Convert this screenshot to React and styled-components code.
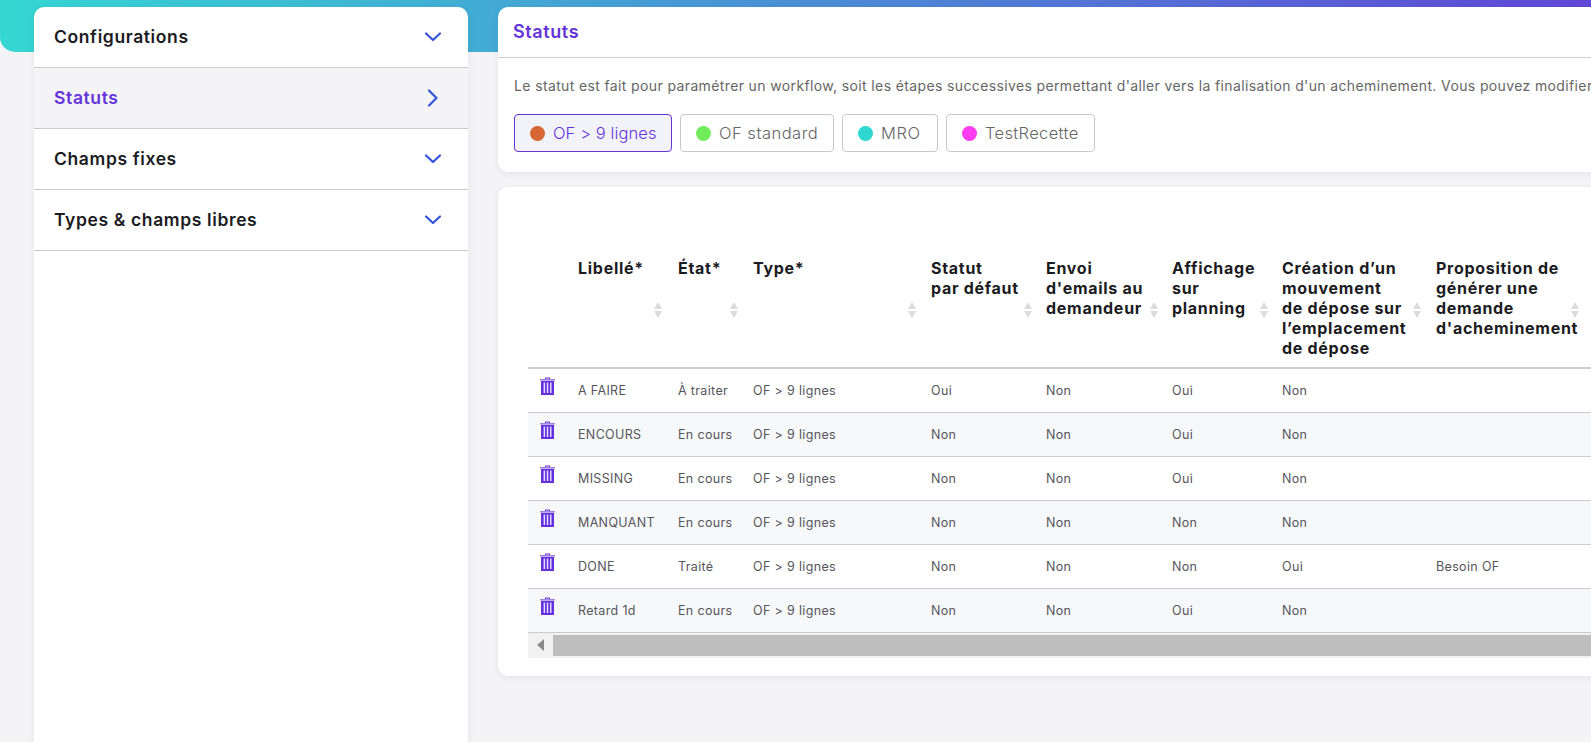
import React from 'react';
import styled, { createGlobalStyle } from 'styled-components';

const Global = createGlobalStyle`
  html, body { margin: 0; height: 100%; overflow: hidden; background: #f4f4f6; }
  body { font-family: Inter, "Liberation Sans", sans-serif; color: #1b1b22; }
  * { box-sizing: border-box; }
`;

const Banner = styled.div`
  position: absolute; left: 0; top: 0; width: 100%; height: 52px;
  background: linear-gradient(90deg, #35d7d3 0%, #6147d7 100%);
  border-bottom-left-radius: 15px;
`;
const Page = styled.div`
  position: relative; width: 1591px; height: 742px; overflow: hidden;
  display: grid; grid-template-columns: 434px 1300px; column-gap: 30px;
  padding: 7px 0 0 34px;
`;
const Sidebar = styled.nav`
  position: relative; background: #fff; border-radius: 10px 10px 0 0;
  box-shadow: 0 2px 10px rgba(0,0,0,.06); height: 760px;
`;
const NavRow = styled.div`
  height: 61px; display: flex; align-items: center; justify-content: space-between;
  padding: 0 26px 0 20px; border-bottom: 1px solid #cbcbcf;
  background: ${p => (p.$active ? '#f4f4f6' : 'transparent')};
  color: ${p => (p.$active ? '#6433d9' : '#1b1b22')};
  font-size: 17.5px; font-weight: 600; letter-spacing: .62px; line-height: 20px;
  border-radius: ${p => (p.$first ? '10px 10px 0 0' : '0')};
`;
const NavLabel = styled.span`
  margin-top: -1px;
`;
const Main = styled.main`
  position: relative; display: flex; flex-direction: column; gap: 15px; width: 1300px;
`;
const Card = styled.section`
  background: #fff; border-radius: 10px; box-shadow: 0 2px 10px rgba(0,0,0,.06);
  overflow: hidden;
`;
const CardTitle = styled.h1`
  margin: 0; height: 51px; padding: 0 15px 2px; display: flex; align-items: center;
  font-size: 18px; font-weight: 600; letter-spacing: .6px; color: #6433d9; border-bottom: 1px solid #cbcbcf;
`;
const Description = styled.p`
  margin: 0; padding: 19px 16px 0; font-size: 14px; line-height: 17px; color: #666;
  white-space: nowrap; font-weight: 400; letter-spacing: .37px;
`;
const Pills = styled.div`
  display: flex; gap: 8px; padding: 20px 16px 20px;
`;
const Pill = styled.div`
  height: 38px; width: ${p => p.$w}px; display: flex; align-items: center; gap: 8px; padding-left: 15px;
  border: 1px solid ${p => (p.$active ? '#6433d9' : '#c8c8cc')}; border-radius: 4px;
  background: ${p => (p.$active ? '#f2f3f8' : '#fff')};
  color: ${p => (p.$active ? '#6433d9' : '#666')};
  font-size: 16.5px; font-weight: 300; letter-spacing: ${p => p.$ls}px; white-space: nowrap;
`;
const Dot = styled.span`
  width: 15px; height: 15px; border-radius: 50%; flex: none; background: ${p => p.$color};
`;
const TableCard = styled(Card)`
  height: 489px; padding: 62px 0 0 30px;
`;
const Table = styled.table`
  border-collapse: collapse; table-layout: fixed; width: 1270px;
`;
const HeadCell = styled.th`
  position: relative; height: 117px; padding: 9px 0 9px 0; text-align: left; vertical-align: top;
  font-size: 16px; line-height: 20px; font-weight: 700; letter-spacing: .72px; color: #1b1b22;
  border-bottom: 2px solid #cbcbcf; white-space: nowrap;
`;
const SortIcon = styled.svg`
  position: absolute; top: 53px; right: ${p => p.$r}px; width: 8px; height: 16px;
`;
const Row = styled.tr`
  background: ${p => (p.$even ? '#f7f8fa' : '#fff')};
`;
const Cell = styled.td`
  height: 44px; padding: 0; font-size: 12.5px; font-weight: 400; color: #55555b;
  border-bottom: 1px solid #cbcbcf; white-space: nowrap; letter-spacing: .35px;
`;
const TrashCell = styled(Cell)`
  padding: 0 0 8px 12px;
`;
const Scrollbar = styled.div`
  display: flex; align-items: center; height: 25px; width: 1270px; background: #f1f1f1;
`;
const ScrollArrow = styled.div`
  width: 25px; display: flex; justify-content: center;
`;
const ScrollThumb = styled.div`
  flex: 1; height: 21px; background: #bebebe;
`;

const Chevron = ({ right }) => (
  <svg width="18" height="18" viewBox="0 0 18 18" fill="none" stroke="#3353d8" strokeWidth="2.2" strokeLinecap="round" strokeLinejoin="round">
    {right ? <path d="M5 1.5 12.5 9 5 16.5" /> : <path d="M2 5.5 9 12 16 5.5" />}
  </svg>
);

const Trash = () => (
  <svg width="15" height="18" viewBox="0 0 15 18" style={{ display: 'block' }}>
    <path d="M5 0.5h5v1.6h-1v-.6h-3v.6h-1z" fill="#6530e0" />
    <rect x="0" y="2" width="15" height="1.6" fill="#9d7fe8" />
    <path d="M1 4h13v14H1z" fill="#6530e0" />
    <rect x="3.6" y="5.5" width="1.5" height="10.5" fill="#e3daf9" />
    <rect x="6.8" y="5.5" width="1.5" height="10.5" fill="#e3daf9" />
    <rect x="10" y="5.5" width="1.5" height="10.5" fill="#e3daf9" />
  </svg>
);

const Sort = ({ r }) => (
  <SortIcon $r={r} viewBox="0 0 8 16">
    <path d="M4 0 8 7H0z M0 9h8L4 16z" fill="#dcdcdc" />
  </SortIcon>
);

const columns = [
  { w: 50, label: '' },
  { w: 100, label: 'Libellé*', r: 16 },
  { w: 75, label: 'État*', r: 15 },
  { w: 178, label: 'Type*', r: 15 },
  { w: 115, label: <>Statut<br />par défaut</>, r: 14 },
  { w: 126, label: <>Envoi<br />d'emails au<br />demandeur</>, r: 14 },
  { w: 110, label: <>Affichage<br />sur<br />planning</>, r: 14 },
  { w: 154, label: <>Création d’un<br />mouvement<br />de dépose sur<br />l’emplacement<br />de dépose</>, r: 15 },
  { w: 163, label: <>Proposition de<br />générer une<br />demande<br />d'acheminement</>, r: 20 },
  { w: 199, label: '' },
];

const rows = [
  ['A FAIRE', 'À traiter', 'Oui', 'Non', 'Oui', 'Non', ''],
  ['ENCOURS', 'En cours', 'Non', 'Non', 'Oui', 'Non', ''],
  ['MISSING', 'En cours', 'Non', 'Non', 'Oui', 'Non', ''],
  ['MANQUANT', 'En cours', 'Non', 'Non', 'Non', 'Non', ''],
  ['DONE', 'Traité', 'Non', 'Non', 'Non', 'Oui', 'Besoin OF'],
  ['Retard 1d', 'En cours', 'Non', 'Non', 'Oui', 'Non', ''],
];

const nav = ['Configurations', 'Statuts', 'Champs fixes', 'Types & champs libres'];
const pills = [
  { t: 'OF > 9 lignes', c: '#d66735', w: 158, ls: .1, active: true },
  { t: 'OF standard', c: '#72ec5d', w: 154, ls: .5 },
  { t: 'MRO', c: '#2ed8d0', w: 96, ls: .6 },
  { t: 'TestRecette', c: '#ff3cf0', w: 149, ls: .35 },
];

export default function App() {
  return (
    <>
      <Global />
      <Page>
        <Banner />
        <Sidebar>
          {nav.map((n, i) => (
            <NavRow key={n} $active={i === 1} $first={i === 0}>
              <NavLabel>{n}</NavLabel>
              <Chevron right={i === 1} />
            </NavRow>
          ))}
        </Sidebar>
        <Main>
          <Card>
            <CardTitle>Statuts</CardTitle>
            <Description>
              Le statut est fait pour paramétrer un workflow, soit les étapes successives permettant d'aller vers la finalisation d'un acheminement. Vous pouvez modifier
            </Description>
            <Pills>
              {pills.map(p => (
                <Pill key={p.t} $active={p.active} $w={p.w} $ls={p.ls}>
                  <Dot $color={p.c} />
                  {p.t}
                </Pill>
              ))}
            </Pills>
          </Card>
          <TableCard>
            <Table>
              <colgroup>
                {columns.map((c, i) => <col key={i} style={{ width: c.w }} />)}
              </colgroup>
              <thead>
                <tr>
                  {columns.map((c, i) => (
                    <HeadCell key={i}>
                      {c.label}
                      {c.r ? <Sort r={c.r} /> : null}
                    </HeadCell>
                  ))}
                </tr>
              </thead>
              <tbody>
                {rows.map((r, i) => (
                  <Row key={r[0]} $even={i % 2 === 1}>
                    <TrashCell><Trash /></TrashCell>
                    <Cell>{r[0]}</Cell>
                    <Cell>{r[1]}</Cell>
                    <Cell>OF &gt; 9 lignes</Cell>
                    <Cell>{r[2]}</Cell>
                    <Cell>{r[3]}</Cell>
                    <Cell>{r[4]}</Cell>
                    <Cell>{r[5]}</Cell>
                    <Cell>{r[6]}</Cell>
                    <Cell />
                  </Row>
                ))}
              </tbody>
            </Table>
            <Scrollbar>
              <ScrollArrow>
                <svg width="7" height="12" viewBox="0 0 7 12"><path d="M7 0v12L0 6z" fill="#8a8a8a" /></svg>
              </ScrollArrow>
              <ScrollThumb />
            </Scrollbar>
          </TableCard>
        </Main>
      </Page>
    </>
  );
}
